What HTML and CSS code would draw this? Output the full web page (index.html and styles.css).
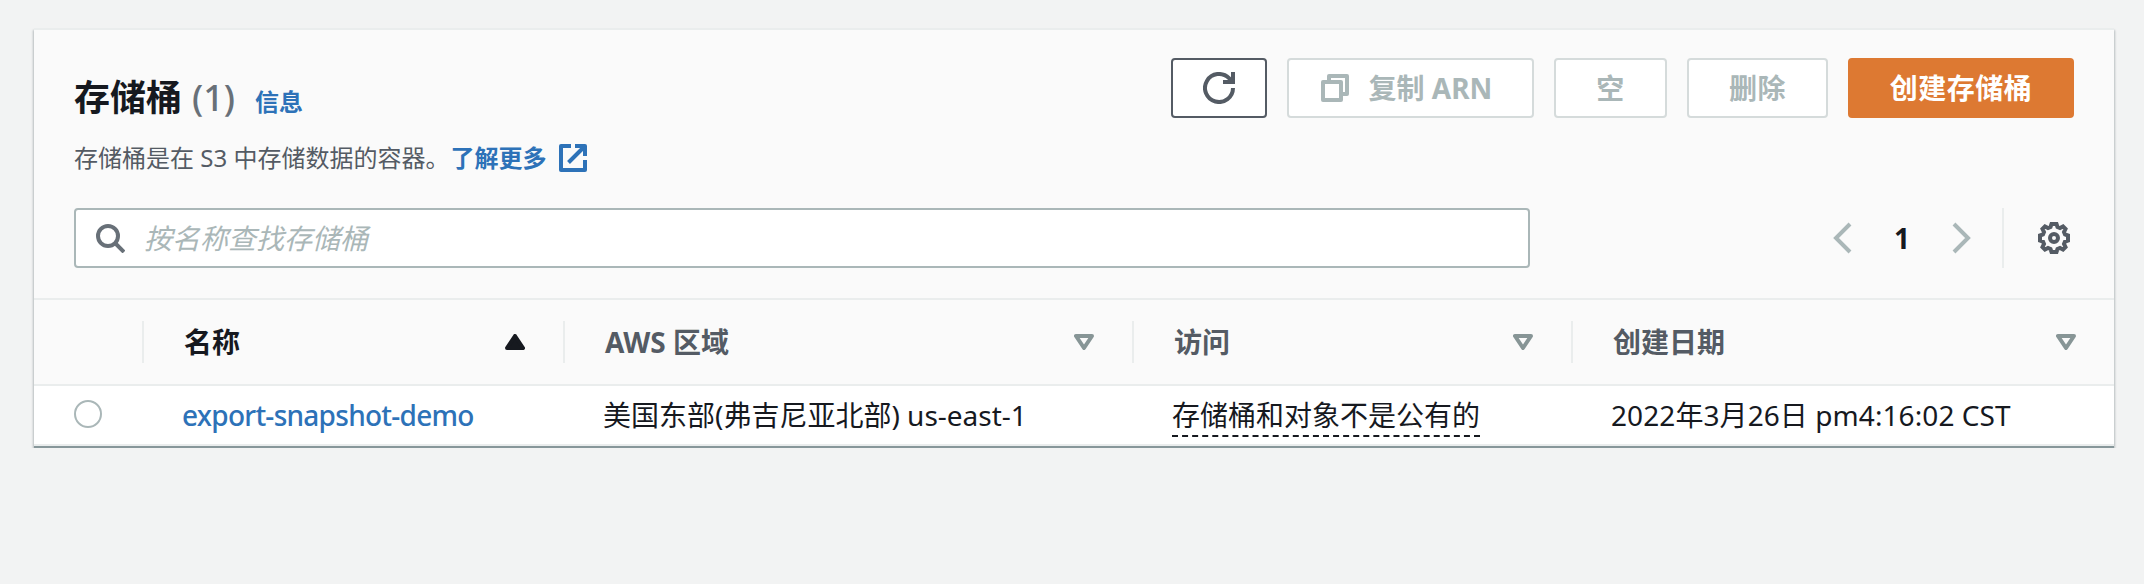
FILE: index.html
```html
<!DOCTYPE html>
<html lang="zh-CN">
<head>
<meta charset="utf-8">
<title>存储桶</title>
<link rel="stylesheet" href="styles.css">
</head>
<body>
<main class="card">
  <header class="head">
    <div class="head-row">
      <div class="heading">
        <div class="title-line"><h1 class="title">存储桶</h1><span class="count">(1)</span><a class="info">信息</a></div>
        <div class="desc"><span>存储桶是在 S3 中存储数据的容器。</span><a class="more">了解更多</a>
          <svg class="ext" viewBox="0 0 28 28"><path d="M12 2H2v24h24V16M16 2h10v10M26 2 9.500 18.500" fill="none" stroke="currentColor" stroke-width="4" stroke-linejoin="round"/></svg>
        </div>
      </div>
      <div class="actions">
        <button class="btn refresh"><svg class="ico" viewBox="0 0 32 32"><path d="M30 16a14 14 0 1 1-4-9.800l4 4M30 0v10H20" fill="none" stroke="currentColor" stroke-width="4"/></svg></button>
        <button class="btn off copy"><svg class="copies" viewBox="0 0 28 28"><path d="M2 8h18v18H2zM8 8V2h18v18h-6" fill="none" stroke="currentColor" stroke-width="4" stroke-linejoin="round"/></svg><span>复制 ARN</span></button>
        <button class="btn off empty">空</button>
        <button class="btn off delete">删除</button>
        <button class="btn primary">创建存储桶</button>
      </div>
    </div>
    <div class="tools">
      <div class="search">
        <svg class="lens" viewBox="0 0 29 29"><circle cx="12" cy="12" r="10" fill="none" stroke="currentColor" stroke-width="4"/><path d="m19 19 9 9" stroke="currentColor" stroke-width="4"/></svg>
        <span class="placeholder">按名称查找存储桶</span>
      </div>
      <div class="pager">
        <svg class="arrow" viewBox="0 0 20 32"><path d="M17 2 3 16l14 14" fill="none" stroke="currentColor" stroke-width="4"/></svg>
        <span class="page">1</span>
        <svg class="arrow" viewBox="0 0 20 32"><path d="m3 2 14 14L3 30" fill="none" stroke="currentColor" stroke-width="4"/></svg>
        <span class="rule"></span>
        <svg class="gear" viewBox="0 0 32 32"><path d="M13.500 2h5l1 3 2.500 1 3-1.500L27.500 7 26 10l1 2.500 3 1v5l-3 1-1 2.500 1.500 3-2.500 2.500-3-1.500-2.500 1-1 3h-5l-1-3-2.500-1-3 1.500L4.500 25 6 22l-1-2.500-3-1v-5l3-1L6 10 4.500 7 7 4.500 10 6l2.500-1z" fill="none" stroke="currentColor" stroke-width="4"/><circle cx="16" cy="16" r="4" fill="none" stroke="currentColor" stroke-width="4"/></svg>
      </div>
    </div>
  </header>
  <div class="grid thead">
    <div class="th"></div>
    <div class="th active"><span>名称</span><svg class="sort" viewBox="0 0 20 16"><path d="M10 2 18 14H2z" fill="currentColor" stroke="currentColor" stroke-width="4" stroke-linejoin="round"/></svg></div>
    <div class="th"><span>AWS 区域</span><svg class="sort" viewBox="0 0 20 16"><path d="M2 2h16l-8 12z" fill="none" stroke="currentColor" stroke-width="4" stroke-linejoin="round"/></svg></div>
    <div class="th"><span>访问</span><svg class="sort" viewBox="0 0 20 16"><path d="M2 2h16l-8 12z" fill="none" stroke="currentColor" stroke-width="4" stroke-linejoin="round"/></svg></div>
    <div class="th"><span>创建日期</span><svg class="sort" viewBox="0 0 20 16"><path d="M2 2h16l-8 12z" fill="none" stroke="currentColor" stroke-width="4" stroke-linejoin="round"/></svg></div>
  </div>
  <div class="grid row">
    <div class="pick"><span class="radio"></span></div>
    <div class="td"><a class="name">export-snapshot-demo</a></div>
    <div class="td">美国东部(弗吉尼亚北部) us-east-1</div>
    <div class="td"><span class="access">存储桶和对象不是公有的</span></div>
    <div class="td date">2022年3月26日 pm4:16:02 CST</div>
  </div>
</main>
</body>
</html>
```
FILE: styles.css
```css
* { box-sizing: border-box; }
body {
  margin: 0;
  padding: 28px 30px 0 34px;
  background: #f2f3f3;
  color: #16191f;
  font: 28px/44px "Noto Sans", "Noto Sans CJK SC", sans-serif;
}
.card {
  height: 420px;
  background: #fff;
  border-top: 2px solid #eaeded;
  border-bottom: 2px solid #87979a;
  box-shadow: 1px 2px 2px 0 rgba(0,28,36,.22), -1px 2px 2px 0 rgba(0,28,36,.22);
}
.head { height: 268px; padding: 28px 40px 0; background: #fafafa; }
.head-row { display: flex; justify-content: space-between; height: 150px; }
.heading { padding-top: 18px; }
.title-line { display: flex; align-items: baseline; height: 44px; }
.title { margin: 0; font-size: 36px; line-height: 44px; font-weight: 700; }
.count { margin-left: 10px; font-size: 36px; font-weight: 500; color: #687078; }
.info { margin-left: 20px; font-size: 24px; font-weight: 700; color: #2d72b8; }
.desc { display: flex; align-items: center; height: 44px; margin-top: 16px; font-size: 24px; color: #545b64; white-space: nowrap; }
.more { margin-left: 1px; font-weight: 700; color: #2d72b8; }
.ext { width: 28px; height: 28px; margin-left: 13px; color: #2d72b8; }
.actions { display: flex; gap: 20px; }
.btn {
  display: flex; align-items: center; justify-content: center;
  height: 60px; padding: 0;
  border: 2px solid #545b64; border-radius: 4px;
  background: #fff; color: #545b64;
  font: inherit; font-weight: 700; letter-spacing: .5px; white-space: nowrap;
}
.ico { width: 32px; height: 32px; }
.refresh { width: 96px; }
.copies { width: 28px; height: 28px; }
.off { border-color: #d5dbdb; color: #aab7b8; }
.copy { width: 247px; gap: 20px; padding-right: 8px; }
.copy span { letter-spacing: 0; }
.empty { width: 113px; }
.delete { width: 141px; }
.primary { width: 226px; border-color: #dd7932; background: #dd7932; color: #fff; }
.tools { display: flex; justify-content: space-between; height: 60px; }
.search {
  display: flex; align-items: center; width: 1456px; padding-left: 20px;
  border: 2px solid #aab7b8; border-radius: 4px; background: #fff; color: #687078;
}
.lens { width: 29px; height: 29px; }
.placeholder { margin-left: 19px; font-style: italic; color: #aab7b8; }
.pager { display: flex; align-items: center; color: #aab7b8; }
.arrow { width: 20px; height: 32px; }
.page { width: 98px; text-align: center; font-weight: 700; color: #16191f; }
.rule { width: 2px; height: 60px; margin: 0 34px 0 31px; background: #eaeded; }
.gear { width: 32px; height: 32px; margin-right: 4px; color: #545b64; }
.grid { display: grid; grid-template-columns: 110px 421px 569px 439px 541px; }
.thead { height: 88px; padding: 21px 0; border: solid #eaeded; border-width: 2px 0; background: #fafafa; }
.th {
  display: flex; align-items: center; justify-content: space-between;
  height: 42px; padding: 0 38px 0 40px;
  border-right: 2px solid #eaeded;
  font-weight: 700; color: #545b64;
}
.th:last-child { border-right: 0; }
.active { color: #16191f; }
.sort { width: 20px; height: 16px; color: #879596; }
.active .sort { color: #16191f; }
.row { height: 60px; padding-top: 7px; border-bottom: 2px solid #eaeded; }
.td { padding-left: 38px; white-space: nowrap; }
.name { font-weight: 500; letter-spacing: -.73px; color: #2d72b8; }
.date { letter-spacing: .08px; }
.access { display: block; width: 308px; height: 44px; border-bottom: 2px dashed #16191f; }
.pick { padding: 7px 0 0 40px; }
.radio { display: block; width: 28px; height: 28px; border: 2px solid #aab7b8; border-radius: 50%; }
```
